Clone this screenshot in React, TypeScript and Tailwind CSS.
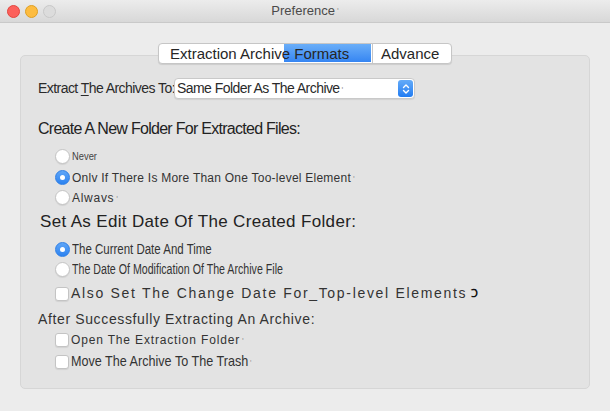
import React from "react";

const font = { fontFamily: '"Liberation Sans", Arial, sans-serif' };

function Radio({ on }: { on?: boolean }) {
  if (on) {
    return (
      <span className="flex h-[15px] w-[15px] shrink-0 items-center justify-center rounded-full border border-[#2f7fe6] bg-gradient-to-b from-[#5fa6f7] to-[#2a82f0]">
        <span className="h-[5px] w-[5px] rounded-full bg-white" />
      </span>
    );
  }
  return <span className="h-[15px] w-[15px] shrink-0 rounded-full border border-[#c4c4c4] bg-white shadow-[0_1px_1px_rgba(0,0,0,0.08)]" />;
}

function Check() {
  return <span className="h-[14px] w-[14px] shrink-0 rounded-[3px] border border-[#c4c4c4] bg-white shadow-[0_1px_1px_rgba(0,0,0,0.08)]" />;
}

function Tick() {
  return <span className="ml-[2px] text-[9px] leading-none text-[#9a9a9a]">'</span>;
}

export default function App() {
  return (
    <div className="h-[411px] w-[610px] overflow-hidden bg-[#ececec] text-[#2a2a2a]" style={font}>
      {/* title bar */}
      <div className="relative flex h-[23px] items-center border-b border-[#c9c9c9] bg-gradient-to-b from-[#ececec] to-[#d8d8d8] px-[7px]">
        <div className="flex gap-[5px]">
          <span className="h-[13px] w-[13px] rounded-full border border-[#e2463f] bg-[#fc605b]" />
          <span className="h-[13px] w-[13px] rounded-full border border-[#dfa023] bg-[#fdbc40]" />
          <span className="h-[13px] w-[13px] rounded-full border border-[#c8c8c8] bg-[#dcdcdc]" />
        </div>
        <div className="absolute inset-x-0 top-0 flex h-[22px] items-center justify-center text-[13px] text-[#4a4a4a]">
          Preference<Tick />
        </div>
      </div>

      {/* tabs */}
      <div className="relative z-10 flex pl-[158px] pt-[20px]">
        <div className="flex h-[21px] rounded-[4px] border border-[#c6c6c6] bg-white text-[15px] leading-none text-[#262626] shadow-[0_1px_1px_rgba(0,0,0,0.1)]">
          <div className="relative flex w-[213px] items-center pl-[11px]">
            <span className="absolute bottom-[1px] left-[125px] top-0 w-[87px] bg-gradient-to-b from-[#6aaef8] to-[#3585f2]" />
            <span className="relative">Extraction Archive Formats</span>
          </div>
          <div className="flex w-[79px] items-center border-l border-[#c6c6c6] pl-[8px]">Advance</div>
        </div>
      </div>

      {/* group panel */}
      <div className="mx-[20px] -mt-[9px] h-[334px] rounded-[5px] border border-[#d6d6d6] bg-[#e3e3e3] pt-[22px]">
        <div className="flex h-[21px] items-center pl-[17px]">
          <span className="w-[136px] whitespace-nowrap text-[14px] tracking-[-0.04em]">
            Extract <span className="underline underline-offset-2">T</span>he Archives To:
          </span>
          <div className="flex h-[21px] w-[241px] items-center justify-between rounded-[4px] border border-[#c9c9c9] bg-white pl-[2px] pr-[1px] shadow-[0_1px_1px_rgba(0,0,0,0.08)]">
            <span className="whitespace-nowrap text-[14px] tracking-[-0.04em]">
              Same Folder As The Archive<Tick />
            </span>
            <span className="flex h-[17px] w-[15px] items-center justify-center rounded-[3px] bg-gradient-to-b from-[#64abf8] to-[#1f7cf2]">
              <svg width="8" height="12" viewBox="0 0 8 12" fill="none" stroke="white" strokeWidth="1.4" strokeLinecap="round" strokeLinejoin="round">
                <path d="M1.5 4.5 L4 2 L6.5 4.5" />
                <path d="M1.5 7.5 L4 10 L6.5 7.5" />
              </svg>
            </span>
          </div>
        </div>

        <div className="mt-[21px] flex h-[18px] items-center pl-[17px] text-[16px] tracking-[-0.045em] text-[#222]">
          Create A New Folder For Extracted Files:
        </div>

        <div className="ml-[34px] mt-[11px] flex h-[15px] items-center gap-[2px]">
          <Radio />
          <span className="origin-left scale-x-[0.85] text-[11px] text-[#444]">Never</span>
        </div>
        <div className="ml-[34px] mt-[6px] flex h-[15px] items-center gap-[2px]">
          <Radio on />
          <span className="whitespace-nowrap text-[12px] tracking-[0.02em] text-[#333]">
            Onlv If There Is More Than One Too-level Element<Tick />
          </span>
        </div>
        <div className="ml-[34px] mt-[5px] flex h-[15px] items-center gap-[2px]">
          <Radio />
          <span className="text-[12px] tracking-[0.06em] text-[#333]">
            Alwavs<Tick />
          </span>
        </div>

        <div className="mt-[8px] flex h-[18px] items-center pl-[19px] text-[17px] tracking-[0.02em] text-[#222]">
          Set As Edit Date Of The Created Folder:
        </div>

        <div className="ml-[34px] mt-[11px] flex h-[15px] items-center gap-[2px]">
          <Radio on />
          <span className="origin-left scale-x-[0.82] whitespace-nowrap text-[14px] text-[#333]">The Current Date And Time</span>
        </div>
        <div className="ml-[34px] mt-[5px] flex h-[15px] items-center gap-[2px]">
          <Radio />
          <span className="origin-left scale-x-[0.76] whitespace-nowrap text-[14px] text-[#333]">
            The Date Of Modification Of The Archive File
          </span>
        </div>

        <div className="ml-[34px] mt-[9px] flex h-[15px] items-center gap-[2px]">
          <Check />
          <span className="whitespace-nowrap text-[14px] tracking-[0.12em] text-[#333]">
            Also Set The Change Date For_Top-level Elements
          </span>
          <span className="ml-[2px] text-[11px] font-bold text-[#111]">Ↄ</span>
        </div>

        <div className="mt-[10px] flex h-[16px] items-center pl-[17px] text-[14px] tracking-[0.045em] text-[#333]">
          After Successfully Extracting An Archive:
        </div>

        <div className="ml-[34px] mt-[6px] flex h-[14px] items-center gap-[2px]">
          <Check />
          <span className="whitespace-nowrap text-[12px] tracking-[0.07em] text-[#333]">
            Open The Extraction Folder<Tick />
          </span>
        </div>
        <div className="ml-[34px] mt-[7px] flex h-[15px] items-center gap-[2px]">
          <Check />
          <span className="origin-left scale-x-[0.84] whitespace-nowrap text-[15px] text-[#333]">
            Move The Archive To The Trash<Tick />
          </span>
        </div>
      </div>
    </div>
  );
}
